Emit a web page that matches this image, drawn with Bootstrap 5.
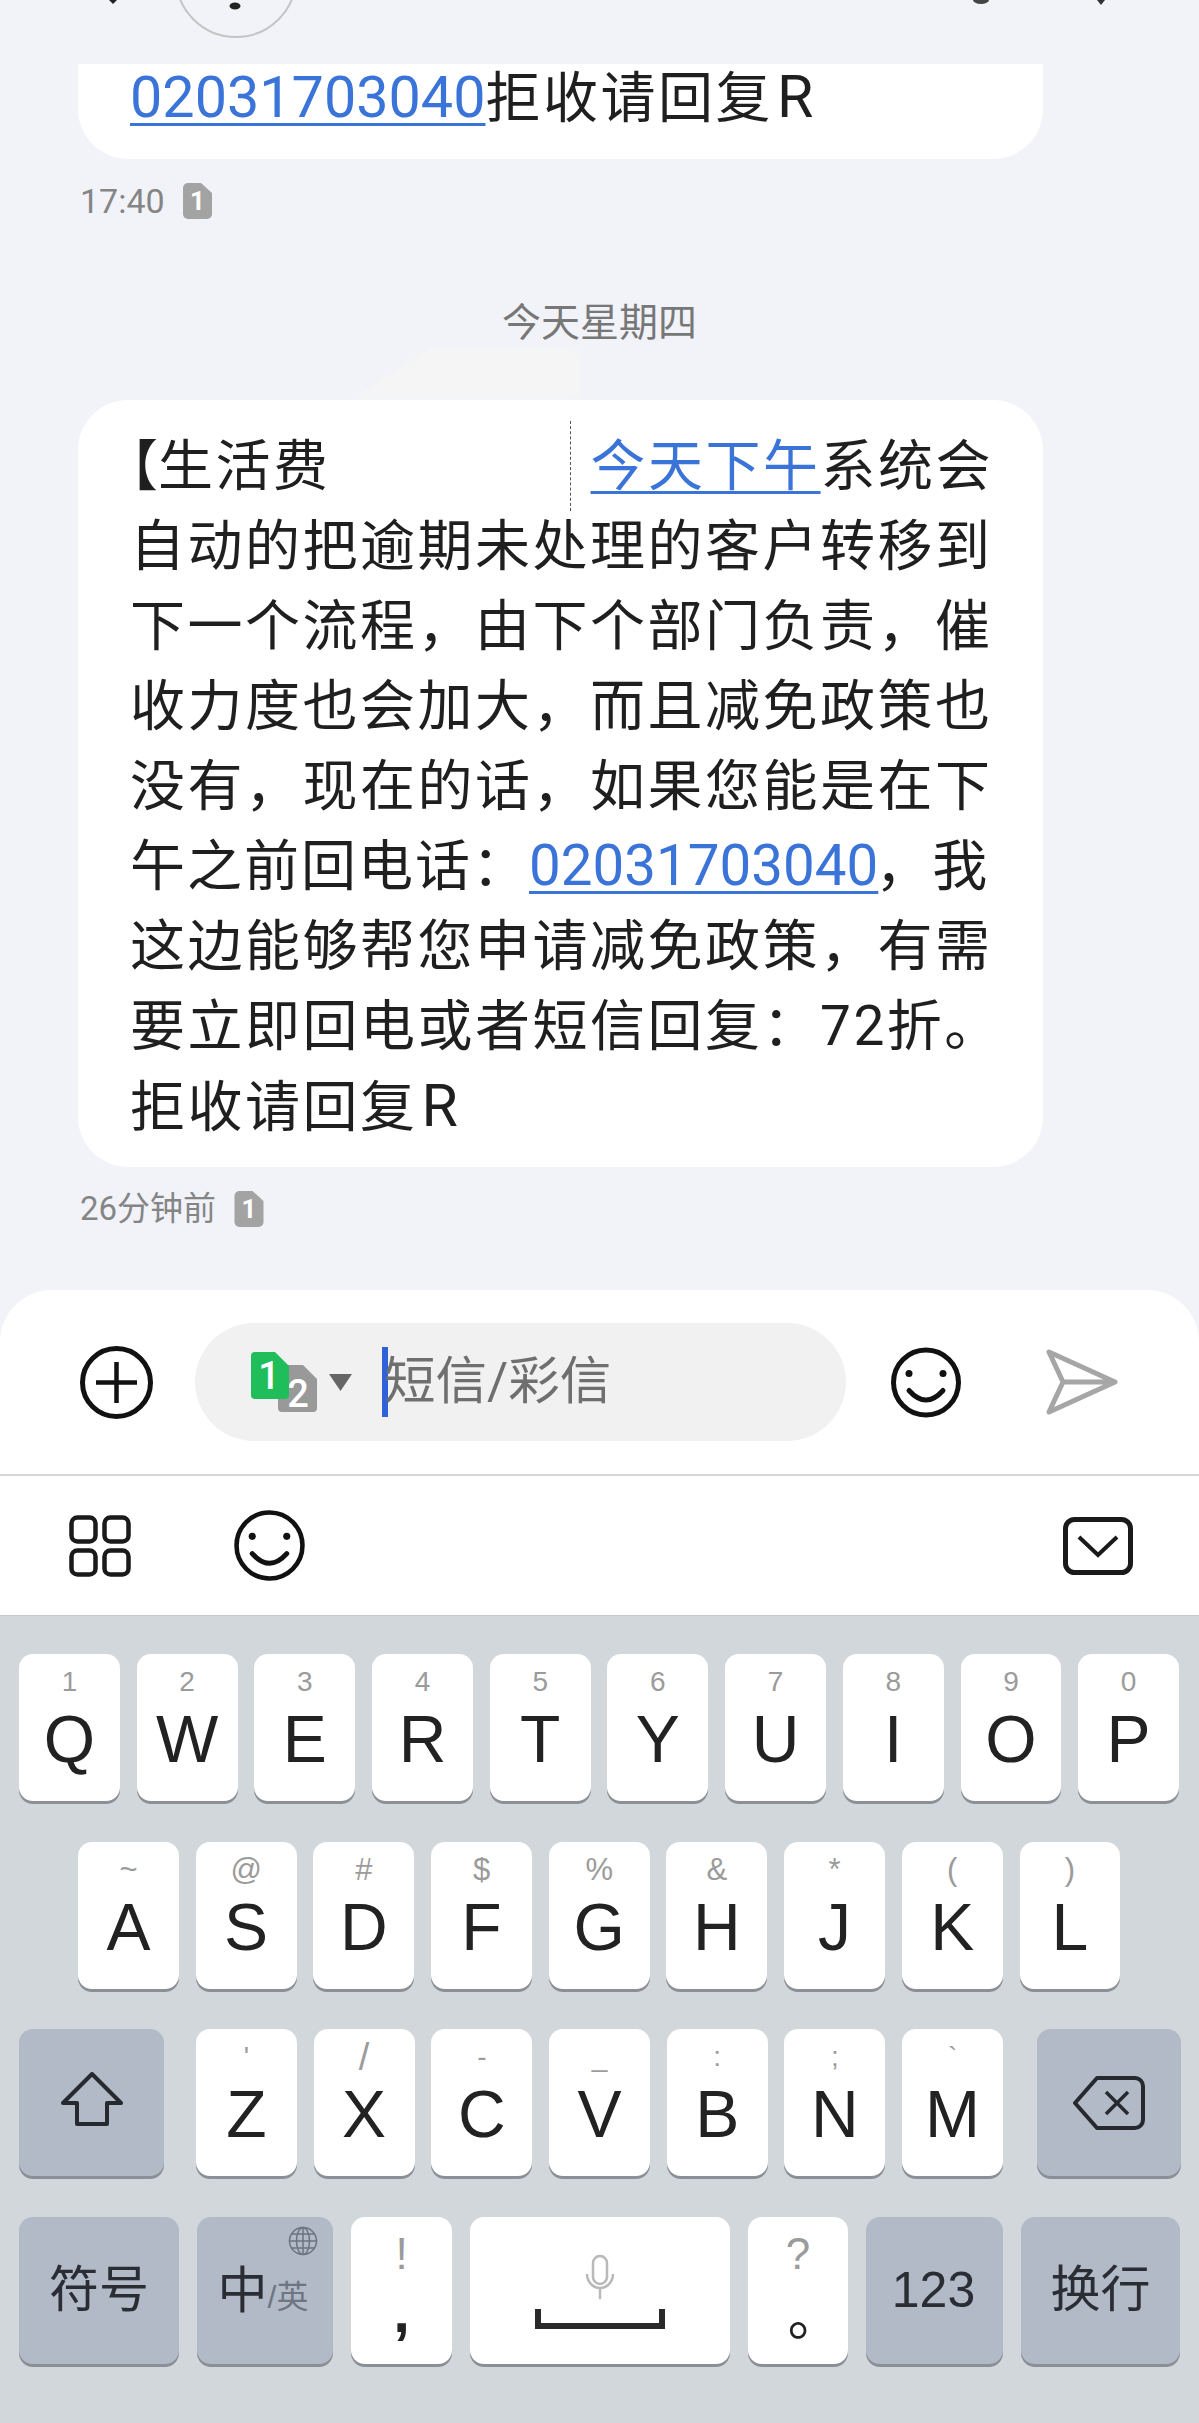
<!DOCTYPE html>
<html lang="zh-CN">
<head>
<meta charset="UTF-8">
<title>短信</title>
<link href="https://cdn.jsdelivr.net/npm/bootstrap@5.3.0/dist/css/bootstrap.min.css" rel="stylesheet">
<style>
    body { width: 1199px; height: 2423px; overflow: hidden; background: #f1f3f8; font-family: Roboto, "Noto Sans CJK SC", sans-serif; }
    .top-strip { display: block; height: 64px; }

    /* messages */
    .msg-bubble { margin-left: 78px; width: 965px; background: #fff; color: #1f1f1f; font-size: 55px; letter-spacing: 2.500px; white-space: nowrap; }
    .msg-cut { height: 95px; padding: 1px 0 0 52px; line-height: 64px; border-radius: 0 0 50px 50px; }
    .msg-main { position: relative; margin-top: 58px; padding: 26px 0 21px 52px; line-height: 80px; border-radius: 50px; }
    .msg-main::before { content: ""; position: absolute; left: 272px; top: -52px; width: 230px; height: 52px; background: #f5f5f6; filter: blur(5px); clip-path: polygon(35% 0, 100% 0, 100% 100%, 0 100%); }
    .msg-line { height: 80px; }
    .msg-line-tight { letter-spacing: 2px; }
    .msg-link { font-size: 57.500px; letter-spacing: 0; color: #3b74d8; text-decoration: underline; text-decoration-thickness: 3px; text-underline-offset: 6px; }
    .msg-line-tight .msg-link { font-size: 56.500px; margin-right: -3px; }
    .msg-cjk-link { font-size: 55px; letter-spacing: 2.500px; }
    .msg-latin { font-size: 59px; letter-spacing: 0; margin-left: 4px; }
    .open-bracket { margin-left: -27px; letter-spacing: 0; }
    .redact-gap { width: 239px; }
    .redact-edge { width: 0; height: 90px; border-left: 1px dashed #555; margin-right: 20px; }
    .msg-meta { margin: 24px 0 0 80px; height: 36px; color: #858585; font-size: 34px; line-height: 36px; gap: 18px; }
    .msg-meta-cjk { font-size: 33px; }
    .date-label { margin-top: 84px; height: 40px; line-height: 40px; text-align: center; color: #777; font-size: 39px; }
    .date-label + .msg-main { margin-top: 57px; }

    /* compose */
    .compose { margin-top: 63px; background: #fff; border-radius: 52px 52px 0 0; }
    .compose-row { height: 184px; padding-left: 80px; border-bottom: 2px solid #d6d6d6; box-sizing: content-box; }
    .compose-pill { width: 651px; height: 118px; margin: 0 45px 0 42px; padding-left: 56px; background: #f1f1f1; border-radius: 59px; }
    .sim-pair { margin-top: 10px; }
    .sim-arrow { margin: 0 29px 0 11px; }
    .caret-bar { width: 6px; height: 70px; background: #2f62d8; }
    .pill-text { margin-left: -4px; color: #6f6f6f; font-size: 51.500px; }
    .send-icon { margin-left: 85px; }
    .tool-row { height: 139px; padding: 0 66px 0 69px; }
    .tool-face { margin-left: 103px; }

    /* keyboard */
    .kb-panel { height: 808px; padding-top: 38px; background: #d2d7dc; border-top: 1px solid #c6c9ce; display: flex; flex-direction: column; gap: 40.500px; font-family: "Liberation Sans", "Noto Sans CJK SC", sans-serif; }
    .kb-row { display: flex; gap: 16.800px; padding-left: 19px; }
    .kb-row-home { padding-left: 78px; }
    .kb-row-bottom { gap: 18px; }
    .kb-key { width: 100.900px; height: 147px; flex: none; display: flex; flex-direction: column; align-items: center; background: #fff; border-radius: 14px; box-shadow: 0 3px 0 #8b9096; color: #222; }
    .kb-fn { background: #b1bac6; justify-content: center; color: #2a2d33; position: relative; }
    .kb-hint { margin-top: 14px; height: 28px; line-height: 28px; font-size: 28px; color: #9b9b9b; }
    .kb-hint-sym { font-size: 31px; }
    .kb-hint-tall { font-size: 38px; }
    .kb-letter { height: 86px; line-height: 86px; font-size: 66px; }
    .kb-shift { width: 145px; margin-right: 15.200px; }
    .kb-shift svg { margin-bottom: 8px; }
    .kb-back { width: 144px; margin-left: 16.800px; }
    .kb-cjk { font-size: 50px; line-height: 1; }
    .kb-w160 { width: 160px; }
    .kb-w159 { width: 159px; }
    .kb-w136 { width: 136px; }
    .kb-w137 { width: 137px; }
    .kb-w101 { width: 101px; }
    .kb-w100 { width: 100px; }
    .kb-w260 { width: 260px; }
    .lang-sub { font-size: 32px; color: #6d7682; }
    .lang-main { margin: 6px 4px 0 0; white-space: nowrap; }
    .lang-globe { position: absolute; top: 9px; right: 15px; }
    .punct-top { margin-top: 14px; height: 46px; line-height: 46px; font-size: 44px; color: #9b9b9b; }
    .punct-comma { margin-top: 1px; height: 68px; line-height: 68px; font-size: 60px; font-weight: 700; color: #222; }
    .punct-stop { margin-top: 35px; height: 32px; line-height: 32px; font-size: 54px; color: #222; font-family: "Noto Sans CJK TC", sans-serif; }
    .space-key { padding-top: 37px; gap: 9px; }
    .num-label { font-size: 50px; margin-right: 2px; }
</style>
</head>
<body>
    <!-- bottom edge of the header icons, scrolled away -->
    <svg class="top-strip" width="1199" height="64" viewBox="0 0 1199 64">
        <circle cx="236" cy="-23" r="60" fill="none" stroke="#c4c4c4" stroke-width="2"/>
        <ellipse cx="235" cy="6" rx="5.500" ry="3.500" fill="#222"/>
        <path d="M109 0h8l-4 4z" fill="#222"/>
        <ellipse cx="981" cy="0" rx="8" ry="4" fill="#444"/>
        <path d="M1097 0h8l-4 5z" fill="#333"/>
    </svg>

    <div class="msg-bubble msg-cut">
        <a class="msg-link">02031703040</a>拒收请回复<span class="msg-latin">R</span>
    </div>
    <div class="msg-meta d-flex align-items-center">
        <span class="meta-time">17:40</span>
        <svg width="29" height="36" viewBox="0 0 29 36">
            <path d="M5 0h13l11 10v21a5 5 0 0 1-5 5H5a5 5 0 0 1-5-5V5a5 5 0 0 1 5-5z" fill="#a3a3a3"/>
            <text x="14.500" y="27" text-anchor="middle" font-family="Roboto" font-weight="700" font-size="26" fill="#fff">1</text>
        </svg>
    </div>

    <div class="date-label">今天星期四</div>

    <div class="msg-bubble msg-main">
        <div class="msg-line d-flex align-items-center">
            <span class="open-bracket">【</span><span>生活费</span>
            <span class="redact-gap"></span>
            <span class="redact-edge"></span>
            <a class="msg-link msg-cjk-link">今天下午</a><span>系统会</span>
        </div>
        <div class="msg-line">自动的把逾期未处理的客户转移到</div>
        <div class="msg-line">下一个流程，由下个部门负责，催</div>
        <div class="msg-line">收力度也会加大，而且减免政策也</div>
        <div class="msg-line">没有，现在的话，如果您能是在下</div>
        <div class="msg-line msg-line-tight">午之前回电话：<a class="msg-link">02031703040</a>，我</div>
        <div class="msg-line">这边能够帮您申请减免政策，有需</div>
        <div class="msg-line">要立即回电或者短信回复：72折。</div>
        <div class="msg-line">拒收请回复<span class="msg-latin">R</span></div>
    </div>
    <div class="msg-meta msg-meta-cjk d-flex align-items-center">
        <span class="meta-time">26分钟前</span>
        <svg width="30" height="36" viewBox="0 0 29 36">
            <path d="M5 0h13l11 10v21a5 5 0 0 1-5 5H5a5 5 0 0 1-5-5V5a5 5 0 0 1 5-5z" fill="#a3a3a3"/>
            <text x="14.500" y="27" text-anchor="middle" font-family="Roboto" font-weight="700" font-size="26" fill="#fff">1</text>
        </svg>
    </div>

    <div class="compose">
        <div class="compose-row d-flex align-items-center">
            <svg width="73" height="73" viewBox="0 0 73 73" fill="none" stroke="#111">
                <circle cx="36.500" cy="36.500" r="34" stroke-width="5"/>
                <path d="M16 36.500h41M36.500 16v41" stroke-width="4.500"/>
            </svg>
            <div class="compose-pill d-flex align-items-center">
                <svg class="sim-pair" width="66" height="70" viewBox="0 0 66 70">
                    <path d="M31 13h21l14 14v29a4 4 0 0 1-4 4H31a4 4 0 0 1-4-4V17a4 4 0 0 1 4-4z" fill="#999"/>
                    <text x="47" y="55" text-anchor="middle" font-family="Roboto" font-weight="500" font-size="38" fill="#fff">2</text>
                    <path d="M4 0h20l14 14v29a4 4 0 0 1-4 4H4a4 4 0 0 1-4-4V4a4 4 0 0 1 4-4z" fill="#1fbe5b"/>
                    <text x="18" y="37" text-anchor="middle" font-family="Roboto" font-weight="500" font-size="38" fill="#fff">1</text>
                </svg>
                <svg class="sim-arrow" width="25" height="18" viewBox="0 0 25 18"><path d="M1 1h23L12.500 18z" fill="#666"/></svg>
                <span class="caret-bar"></span>
                <span class="pill-text">短信/彩信</span>
            </div>
            <svg width="70" height="71" viewBox="0 0 70 70" fill="none" stroke="#111">
                <circle cx="35" cy="35" r="32.500" stroke-width="5"/>
                <circle cx="18" cy="26" r="3.500" fill="#111" stroke="none"/>
                <circle cx="52" cy="26" r="3.500" fill="#111" stroke="none"/>
                <path d="M18 43q17 19 34 0" stroke-width="5" stroke-linecap="round"/>
            </svg>
            <svg class="send-icon" width="72" height="66" viewBox="0 0 72 66" fill="none" stroke="#a6a6a6" stroke-width="5" stroke-linejoin="round">
                <path d="M3 3l66 30L3 63l14-30zM17 33h52"/>
            </svg>
        </div>
        <div class="tool-row d-flex align-items-center">
            <svg width="62" height="62" viewBox="0 0 62 62" fill="none" stroke="#1a1a1a" stroke-width="4.500">
                <rect x="2.500" y="2.500" width="24" height="24" rx="6"/>
                <rect x="35.500" y="2.500" width="24" height="24" rx="6"/>
                <rect x="2.500" y="35.500" width="24" height="24" rx="6"/>
                <rect x="35.500" y="35.500" width="24" height="24" rx="6"/>
            </svg>
            <svg class="tool-face" width="71" height="71" viewBox="0 0 70 70" fill="none" stroke="#111">
                <circle cx="35" cy="35" r="32.500" stroke-width="4.500"/>
                <circle cx="18" cy="26" r="3.500" fill="#111" stroke="none"/>
                <circle cx="52" cy="26" r="3.500" fill="#111" stroke="none"/>
                <path d="M18 43q17 19 34 0" stroke-width="5" stroke-linecap="round"/>
            </svg>
            <svg class="ms-auto" width="70" height="58" viewBox="0 0 70 58" fill="none" stroke="#1a1a1a">
                <rect x="2.500" y="2.500" width="65" height="53" rx="9" stroke-width="5"/>
                <path d="M16 20l19 18 19-18" stroke-width="4"/>
            </svg>
        </div>
    </div>

    <div class="kb-panel">
        <div class="kb-row">
            <div class="kb-key"><span class="kb-hint">1</span><span class="kb-letter">Q</span></div>
            <div class="kb-key"><span class="kb-hint">2</span><span class="kb-letter">W</span></div>
            <div class="kb-key"><span class="kb-hint">3</span><span class="kb-letter">E</span></div>
            <div class="kb-key"><span class="kb-hint">4</span><span class="kb-letter">R</span></div>
            <div class="kb-key"><span class="kb-hint">5</span><span class="kb-letter">T</span></div>
            <div class="kb-key"><span class="kb-hint">6</span><span class="kb-letter">Y</span></div>
            <div class="kb-key"><span class="kb-hint">7</span><span class="kb-letter">U</span></div>
            <div class="kb-key"><span class="kb-hint">8</span><span class="kb-letter">I</span></div>
            <div class="kb-key"><span class="kb-hint">9</span><span class="kb-letter">O</span></div>
            <div class="kb-key"><span class="kb-hint">0</span><span class="kb-letter">P</span></div>
        </div>
        <div class="kb-row kb-row-home">
            <div class="kb-key"><span class="kb-hint kb-hint-sym">~</span><span class="kb-letter">A</span></div>
            <div class="kb-key"><span class="kb-hint kb-hint-sym">@</span><span class="kb-letter">S</span></div>
            <div class="kb-key"><span class="kb-hint kb-hint-sym">#</span><span class="kb-letter">D</span></div>
            <div class="kb-key"><span class="kb-hint kb-hint-sym">$</span><span class="kb-letter">F</span></div>
            <div class="kb-key"><span class="kb-hint kb-hint-sym">%</span><span class="kb-letter">G</span></div>
            <div class="kb-key"><span class="kb-hint kb-hint-sym">&amp;</span><span class="kb-letter">H</span></div>
            <div class="kb-key"><span class="kb-hint kb-hint-sym">*</span><span class="kb-letter">J</span></div>
            <div class="kb-key"><span class="kb-hint kb-hint-sym">(</span><span class="kb-letter">K</span></div>
            <div class="kb-key"><span class="kb-hint kb-hint-sym">)</span><span class="kb-letter">L</span></div>
        </div>
        <div class="kb-row">
            <div class="kb-key kb-fn kb-shift">
                <svg width="62" height="54" viewBox="0 0 62 54" fill="none" stroke="#26292e" stroke-width="4" stroke-linejoin="round">
                    <path d="M31 2l29 29H46v21H16V31H2z"/>
                </svg>
            </div>
            <div class="kb-key"><span class="kb-hint">'</span><span class="kb-letter">Z</span></div>
            <div class="kb-key"><span class="kb-hint kb-hint-tall">/</span><span class="kb-letter">X</span></div>
            <div class="kb-key"><span class="kb-hint">-</span><span class="kb-letter">C</span></div>
            <div class="kb-key"><span class="kb-hint">_</span><span class="kb-letter">V</span></div>
            <div class="kb-key"><span class="kb-hint">:</span><span class="kb-letter">B</span></div>
            <div class="kb-key"><span class="kb-hint">;</span><span class="kb-letter">N</span></div>
            <div class="kb-key"><span class="kb-hint">`</span><span class="kb-letter">M</span></div>
            <div class="kb-key kb-fn kb-back">
                <svg width="72" height="54" viewBox="0 0 72 54" fill="none" stroke="#26292e" stroke-width="4" stroke-linejoin="round">
                    <path d="M24 2h38a8 8 0 0 1 8 8v34a8 8 0 0 1-8 8H24L2 27z"/>
                    <path d="M33 16l22 22M55 16L33 38" stroke-width="3.500"/>
                </svg>
            </div>
        </div>
        <div class="kb-row kb-row-bottom">
            <div class="kb-key kb-fn kb-w160"><span class="kb-cjk">符号</span></div>
            <div class="kb-key kb-fn kb-w136">
                <svg class="lang-globe" width="30" height="30" viewBox="0 0 30 30" fill="none" stroke="#6b7480" stroke-width="1.500">
                    <circle cx="15" cy="15" r="13.500"/>
                    <ellipse cx="15" cy="15" rx="6.500" ry="13.500"/>
                    <path d="M15 1.500v27M1.500 15h27M3.500 8h23M3.500 22h23"/>
                </svg>
                <span class="lang-main"><span class="kb-cjk">中</span><span class="lang-sub">/英</span></span>
            </div>
            <div class="kb-key kb-w101"><span class="punct-top">!</span><span class="punct-comma">,</span></div>
            <div class="kb-key kb-w260 space-key">
                <svg width="30" height="46" viewBox="0 0 30 46" fill="none" stroke="#b9b9b9" stroke-width="2.500">
                    <rect x="8" y="2" width="14" height="28" rx="7"/>
                    <path d="M2 20a13 14 0 0 0 26 0M15 34v11"/>
                </svg>
                <svg width="130" height="20" viewBox="0 0 130 20" fill="none" stroke="#2a2a2a" stroke-width="6">
                    <path d="M3 0v17h124V0"/>
                </svg>
            </div>
            <div class="kb-key kb-w100"><span class="punct-top">?</span><span class="punct-stop">。</span></div>
            <div class="kb-key kb-fn kb-w137"><span class="num-label">123</span></div>
            <div class="kb-key kb-fn kb-w159"><span class="kb-cjk">换行</span></div>
        </div>
    </div>

    <script src="https://cdn.jsdelivr.net/npm/bootstrap@5.3.0/dist/js/bootstrap.bundle.min.js"></script>
</body>
</html>
